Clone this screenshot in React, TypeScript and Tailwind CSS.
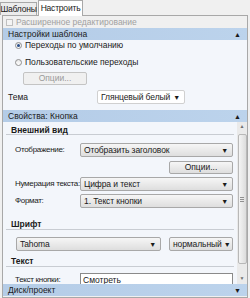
import React from 'react';

const font = { fontFamily: '"Liberation Sans", Arial, sans-serif', fontSize: '8.5px' };

function Header({ title, up = true }: { title: string; up?: boolean }) {
  return (
    <div className="flex h-[12px] shrink-0 items-center justify-between bg-gradient-to-r from-[#b4cce7] to-[#bcd3ec] pl-[5px] pr-[6px] leading-none text-[#1a1a1a]">
      <span className="whitespace-nowrap">{title}</span>
      <span className="text-[7px]">{up ? '▲' : '▼'}</span>
    </div>
  );
}

function Select({ value, className = '', flat = false }: { value: string; className?: string; flat?: boolean }) {
  return (
    <div
      className={`flex h-[14px] items-center justify-between overflow-hidden rounded-[2px] border pl-[3px] pr-[4px] leading-none tracking-[-0.1px] text-[#1a1a1a] ${
        flat ? 'border-[#d0d0d0] bg-white' : 'border-[#a8a8a8] bg-gradient-to-b from-[#f6f6f6] to-[#dedede]'
      } ${className}`}
    >
      <span className="whitespace-nowrap">{value}</span>
      <span className="ml-[2px] text-[7px]">▼</span>
    </div>
  );
}

function Button({ label, disabled = false, className = '' }: { label: string; disabled?: boolean; className?: string }) {
  return (
    <div
      className={`flex h-[13px] items-center justify-center rounded-[2px] border leading-none ${
        disabled
          ? 'border-[#c4c4c4] bg-[#f0f0f0] text-[#9a9a9a]'
          : 'border-[#a8a8a8] bg-gradient-to-b from-[#f6f6f6] to-[#dedede] text-[#1a1a1a]'
      } ${className}`}
    >
      {label}
    </div>
  );
}

function Radio({ checked, label }: { checked?: boolean; label: string }) {
  return (
    <div className="flex h-[9px] items-center gap-[3px] pl-[12px] leading-none text-[#1a1a1a]">
      <span className="flex h-[7px] w-[7px] items-center justify-center rounded-full border border-[#8f8f8f] bg-gradient-to-b from-[#e8e8e8] to-white">
        {checked && <span className="h-[3px] w-[3px] rounded-full bg-[#2a4f8a]" />}
      </span>
      <span className="whitespace-nowrap">{label}</span>
    </div>
  );
}

function SectionTitle({ title }: { title: string }) {
  return (
    <div className="mr-[3px] h-[10px] border-b border-[#c8ccd2] pl-[5px] font-bold leading-[8px] text-[#1a1a1a]">
      {title}
    </div>
  );
}

function Row({ label, children }: { label: string; children: React.ReactNode }) {
  return (
    <div className="flex h-[14px] items-center pr-[4px]">
      <span className="w-[74px] shrink-0 whitespace-nowrap pl-[9px] text-[8px] leading-none tracking-[-0.3px] text-[#1a1a1a]">{label}</span>
      <div className="min-w-0 flex-1">{children}</div>
    </div>
  );
}

export default function App() {
  return (
    <div className="h-[298px] w-[250px] overflow-hidden bg-[#f0f0f0]" style={font}>
      {/* Вкладки */}
      <div className="flex h-[15px] items-end">
        <div className="flex h-[13px] w-[37px] items-center justify-center border border-b-0 border-[#a8a8a8] bg-[#ececec] leading-none tracking-[-0.2px] text-[#1a1a1a]">
          Шаблоны
        </div>
        <div className="relative z-10 -mb-px ml-px flex h-[16px] w-[45px] items-center justify-center border border-b-0 border-[#a8a8a8] bg-white leading-none tracking-[-0.2px] text-[#1a1a1a]">
          Настроить
        </div>
      </div>

      {/* Панель */}
      <div className="ml-[2px] flex h-[283px] w-[246px] flex-col overflow-hidden border border-[#a8a8a8] bg-[#f0f0f0]">
        <div className="flex h-[12px] shrink-0 items-center gap-[3px] pl-[3px] leading-none text-[#a0a0a0]">
          <span className="h-[7px] w-[7px] border border-[#c0c0c0] bg-[#f4f4f4]" />
          <span className="whitespace-nowrap">Расширенное редактирование</span>
        </div>

        <Header title="Настройки шаблона" />

        <div className="flex h-[70px] shrink-0 flex-col overflow-hidden bg-[#f3f6fb]">
          <div className="mt-[1px]">
            <Radio checked label="Переходы по умолчанию" />
          </div>
          <div className="mt-[8px]">
            <Radio label="Пользовательские переходы" />
          </div>
          <Button label="Опции..." disabled className="ml-[20px] mt-[5px] w-[64px]" />
          <div className="mt-[5px] flex items-center">
            <span className="w-[94px] pl-[5px] leading-none text-[#1a1a1a]">Тема</span>
            <Select value="Глянцевый белый" flat className="w-[88px]" />
          </div>
        </div>

        <Header title="Свойства: Кнопка" />

        <div className="flex h-[162px] shrink-0 overflow-hidden bg-[#f3f6fb]">
          <div className="flex min-w-0 flex-1 flex-col overflow-hidden pl-[3px] pt-[4px]">
            <SectionTitle title="Внешний вид" />
            <div className="mt-[8px]">
              <Row label="Отображение:">
                <Select value="Отобразить заголовок" />
              </Row>
            </div>
            <div className="mt-[4px] flex justify-end pr-[4px]">
              <Button label="Опции..." className="w-[64px]" />
            </div>
            <div className="mt-[3px]">
              <Row label="Нумерация текста:">
                <Select value="Цифра и текст" />
              </Row>
            </div>
            <div className="mt-[3px]">
              <Row label="Формат:">
                <Select value="1. Текст кнопки" />
              </Row>
            </div>
            <div className="mt-[12px]">
              <SectionTitle title="Шрифт" />
            </div>
            <div className="mt-[7px] flex gap-[8px] pl-[10px] pr-[4px]">
              <Select value="Tahoma" className="w-[145px] shrink-0" />
              <Select value="нормальный" className="min-w-0 flex-1" />
            </div>
            <div className="mt-[6px]">
              <SectionTitle title="Текст" />
            </div>
            <div className="mt-[6px]">
              <Row label="Текст кнопки:">
                <div className="h-[14px] border border-[#8a8a8a] bg-white pl-[2px] leading-[12px] text-[#1a1a1a]">
                  Смотреть
                </div>
              </Row>
            </div>
          </div>

          {/* Полоса прокрутки */}
          <div className="flex w-[10px] shrink-0 flex-col items-center bg-[#eaeaea]">
            <div className="flex h-[10px] items-center text-[5px] text-[#707070]">▲</div>
            <div className="mt-[2px] flex h-[130px] w-[9px] items-center justify-center rounded-[2px] border border-[#b8b8b8] bg-gradient-to-r from-[#f4f4f4] to-[#dcdcdc]">
              <div className="flex flex-col gap-[1px]">
                <span className="h-px w-[4px] bg-[#909090]" />
                <span className="h-px w-[4px] bg-[#909090]" />
                <span className="h-px w-[4px] bg-[#909090]" />
              </div>
            </div>
            <div className="flex-1" />
            <div className="flex h-[10px] items-center text-[5px] text-[#707070]">▼</div>
          </div>
        </div>

        <Header title="Диск/проект" up={false} />
      </div>
    </div>
  );
}
